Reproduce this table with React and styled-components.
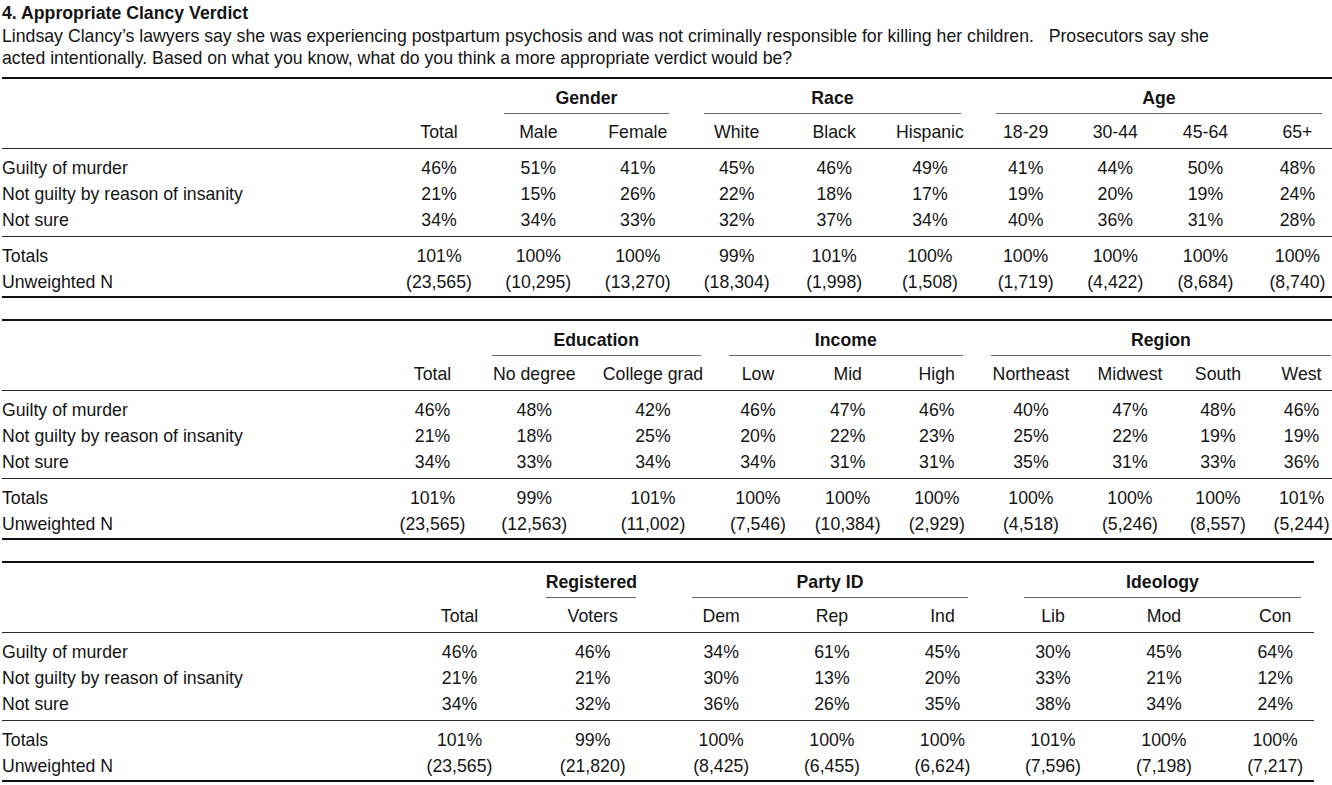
import React from 'react';
import styled, { createGlobalStyle } from 'styled-components';

const GlobalStyle = createGlobalStyle`
  html, body { margin: 0; padding: 0; background: #ffffff; }
  body {
    font-family: "Liberation Sans", Arial, Helvetica, sans-serif;
    color: #141414;
    overflow: hidden;
  }
`;

const Page = styled.main`
  width: 1332px;
  height: 785px;
  overflow: hidden;
  box-sizing: border-box;
  padding: 2px 0 0 2px;
  font-size: 17.7px;
`;

const Title = styled.h1`
  margin: 0;
  font-size: 17.7px;
  font-weight: 700;
  line-height: 22.5px;
`;

const Question = styled.p`
  margin: 0;
  line-height: 22.5px;
  white-space: pre;
`;

const Stack = styled.div`
  display: flex;
  flex-direction: column;
  gap: 21px;
  margin-top: 7px;
`;

const Table = styled.section`
  width: ${(p) => p.$width}px;
`;

const Rule = styled.div`
  height: ${(p) => (p.$kind === 'mid' ? 1 : 2)}px;
  background: ${(p) => (p.$kind === 'mid' ? '#2a2a2a' : '#111111')};
  margin-top: ${(p) => (p.$kind === 'top' ? 0 : p.$kind === 'mid' ? 3 : 1)}px;
  margin-bottom: ${(p) => (p.$kind === 'bottom' ? 0 : 6)}px;
`;

const Row = styled.div`
  display: grid;
  grid-template-columns: ${(p) => p.$cols};
  line-height: 26px;
  margin-top: ${(p) => p.$gapTop || 0}px;
`;

const Label = styled.div`
  white-space: nowrap;
`;

const Cell = styled.div`
  text-align: center;
  white-space: nowrap;
`;

const GroupCell = styled.div`
  grid-column: ${(p) => p.$start} / span ${(p) => p.$span};
  margin-left: ${(p) => p.$ml}px;
  margin-right: ${(p) => p.$mr}px;
  text-align: center;
  font-weight: 700;
  white-space: nowrap;
  padding-bottom: 2px;
  border-bottom: 1px solid #666666;
`;

const tables = [
  {
    width: 1338,
    b0: 389,
    centers: [439, 538.3, 637.8, 736.7, 834.2, 930, 1025.7, 1115.3, 1205.5, 1297.5],
    headers: ['Total', 'Male', 'Female', 'White', 'Black', 'Hispanic', '18-29', '30-44', '45-64', '65+'],
    groups: [
      { label: 'Gender', from: 1, span: 2, x: [504, 669] },
      { label: 'Race', from: 3, span: 3, x: [704, 961] },
      { label: 'Age', from: 6, span: 4, x: [996, 1322] },
    ],
    body: [
      ['Guilty of murder', '46%', '51%', '41%', '45%', '46%', '49%', '41%', '44%', '50%', '48%'],
      ['Not guilty by reason of insanity', '21%', '15%', '26%', '22%', '18%', '17%', '19%', '20%', '19%', '24%'],
      ['Not sure', '34%', '34%', '33%', '32%', '37%', '34%', '40%', '36%', '31%', '28%'],
    ],
    foot: [
      ['Totals', '101%', '100%', '100%', '99%', '101%', '100%', '100%', '100%', '100%', '100%'],
      ['Unweighted N', '(23,565)', '(10,295)', '(13,270)', '(18,304)', '(1,998)', '(1,508)', '(1,719)', '(4,422)', '(8,684)', '(8,740)'],
    ],
  },
  {
    width: 1338,
    b0: 380,
    centers: [432.5, 534.3, 653, 758, 847.7, 936.8, 1031, 1130, 1218, 1301.6],
    headers: ['Total', 'No degree', 'College grad', 'Low', 'Mid', 'High', 'Northeast', 'Midwest', 'South', 'West'],
    groups: [
      { label: 'Education', from: 1, span: 2, x: [491.7, 700.7] },
      { label: 'Income', from: 3, span: 3, x: [729, 962.7] },
      { label: 'Region', from: 6, span: 4, x: [991, 1331] },
    ],
    body: [
      ['Guilty of murder', '46%', '48%', '42%', '46%', '47%', '46%', '40%', '47%', '48%', '46%'],
      ['Not guilty by reason of insanity', '21%', '18%', '25%', '20%', '22%', '23%', '25%', '22%', '19%', '19%'],
      ['Not sure', '34%', '33%', '34%', '34%', '31%', '31%', '35%', '31%', '33%', '36%'],
    ],
    foot: [
      ['Totals', '101%', '99%', '101%', '100%', '100%', '100%', '100%', '100%', '100%', '101%'],
      ['Unweighted N', '(23,565)', '(12,563)', '(11,002)', '(7,546)', '(10,384)', '(2,929)', '(4,518)', '(5,246)', '(8,557)', '(5,244)'],
    ],
  },
  {
    width: 1312,
    b0: 400,
    centers: [459.5, 592.7, 721.2, 832, 942.5, 1053, 1164, 1275.2],
    headers: ['Total', 'Voters', 'Dem', 'Rep', 'Ind', 'Lib', 'Mod', 'Con'],
    groups: [
      { label: 'Registered', from: 1, span: 1, x: [545.7, 636] },
      { label: 'Party ID', from: 2, span: 3, x: [691.7, 968.3] },
      { label: 'Ideology', from: 5, span: 3, x: [1024, 1301] },
    ],
    body: [
      ['Guilty of murder', '46%', '46%', '34%', '61%', '45%', '30%', '45%', '64%'],
      ['Not guilty by reason of insanity', '21%', '21%', '30%', '13%', '20%', '33%', '21%', '12%'],
      ['Not sure', '34%', '32%', '36%', '26%', '35%', '38%', '34%', '24%'],
    ],
    foot: [
      ['Totals', '101%', '99%', '100%', '100%', '100%', '101%', '100%', '100%'],
      ['Unweighted N', '(23,565)', '(21,820)', '(8,425)', '(6,455)', '(6,624)', '(7,596)', '(7,198)', '(7,217)'],
    ],
  },
];

const PAGE_LEFT = 2;

function layout(t) {
  const bounds = [t.b0];
  t.centers.forEach((c) => bounds.push(2 * c - bounds[bounds.length - 1]));
  const widths = bounds.slice(1).map((b, i) => b - bounds[i]);
  const cols = [`${t.b0 - PAGE_LEFT}px`, ...widths.map((w) => `${w.toFixed(2)}px`)].join(' ');
  return { bounds, cols };
}

function DataRow({ cols, cells }) {
  const [label, ...values] = cells;
  return (
    <Row $cols={cols}>
      <Label>{label}</Label>
      {values.map((v, i) => (
        <Cell key={i}>{v}</Cell>
      ))}
    </Row>
  );
}

function Crosstab({ t }) {
  const { bounds, cols } = layout(t);
  return (
    <Table $width={t.width}>
      <Rule $kind="top" />
      <Row $cols={cols}>
        {t.groups.map((g) => (
          <GroupCell
            key={g.label}
            $start={g.from + 2}
            $span={g.span}
            $ml={g.x[0] - bounds[g.from]}
            $mr={bounds[g.from + g.span] - g.x[1]}
          >
            {g.label}
          </GroupCell>
        ))}
      </Row>
      <Row $cols={cols} $gapTop={5}>
        <Label />
        {t.headers.map((h) => (
          <Cell key={h}>{h}</Cell>
        ))}
      </Row>
      <Rule $kind="mid" />
      {t.body.map((r) => (
        <DataRow key={r[0]} cols={cols} cells={r} />
      ))}
      <Rule $kind="mid" />
      {t.foot.map((r) => (
        <DataRow key={r[0]} cols={cols} cells={r} />
      ))}
      <Rule $kind="bottom" />
    </Table>
  );
}

export default function App() {
  return (
    <>
      <GlobalStyle />
      <Page>
        <Title>4. Appropriate Clancy Verdict</Title>
        <Question>
          {'Lindsay Clancy\u2019s lawyers say she was experiencing postpartum psychosis and was not criminally responsible for killing her children.   Prosecutors say she'}
        </Question>
        <Question>
          acted intentionally. Based on what you know, what do you think a more appropriate verdict would be?
        </Question>
        <Stack>
          {tables.map((t, i) => (
            <Crosstab key={i} t={t} />
          ))}
        </Stack>
      </Page>
    </>
  );
}
